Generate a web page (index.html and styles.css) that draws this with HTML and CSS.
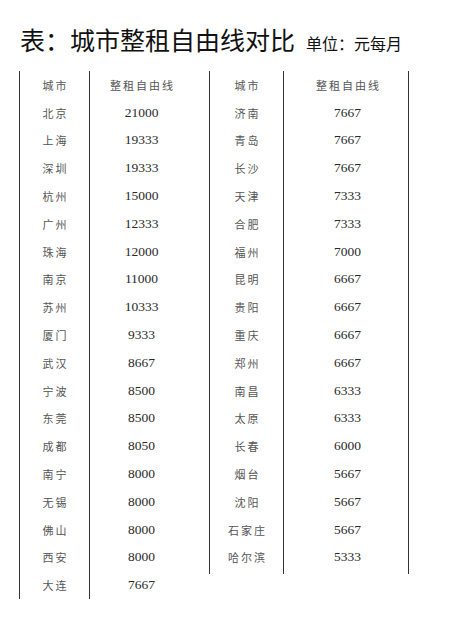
FILE: index.html
```html
<!DOCTYPE html>
<html lang="zh-CN">
<head>
<meta charset="utf-8">
<title>城市整租自由线对比</title>
<link rel="stylesheet" href="styles.css">
</head>
<body>
<div class="page">
  <h1 class="title">表：城市整租自由线对比<span class="unit">单位：元每月</span></h1>
  <div class="tables">
    <div class="group left">
      <div class="col c1">
        <div class="cell zh">城市</div>
        <div class="cell zh">北京</div>
        <div class="cell zh">上海</div>
        <div class="cell zh">深圳</div>
        <div class="cell zh">杭州</div>
        <div class="cell zh">广州</div>
        <div class="cell zh">珠海</div>
        <div class="cell zh">南京</div>
        <div class="cell zh">苏州</div>
        <div class="cell zh">厦门</div>
        <div class="cell zh">武汉</div>
        <div class="cell zh">宁波</div>
        <div class="cell zh">东莞</div>
        <div class="cell zh">成都</div>
        <div class="cell zh">南宁</div>
        <div class="cell zh">无锡</div>
        <div class="cell zh">佛山</div>
        <div class="cell zh">西安</div>
        <div class="cell zh">大连</div>
      </div>
      <div class="col c2">
        <div class="cell zh">整租自由线</div>
        <div class="cell num">21000</div>
        <div class="cell num">19333</div>
        <div class="cell num">19333</div>
        <div class="cell num">15000</div>
        <div class="cell num">12333</div>
        <div class="cell num">12000</div>
        <div class="cell num">11000</div>
        <div class="cell num">10333</div>
        <div class="cell num">9333</div>
        <div class="cell num">8667</div>
        <div class="cell num">8500</div>
        <div class="cell num">8500</div>
        <div class="cell num">8050</div>
        <div class="cell num">8000</div>
        <div class="cell num">8000</div>
        <div class="cell num">8000</div>
        <div class="cell num">8000</div>
        <div class="cell num">7667</div>
      </div>
    </div>
    <div class="group right">
      <div class="col c3">
        <div class="cell zh">城市</div>
        <div class="cell zh">济南</div>
        <div class="cell zh">青岛</div>
        <div class="cell zh">长沙</div>
        <div class="cell zh">天津</div>
        <div class="cell zh">合肥</div>
        <div class="cell zh">福州</div>
        <div class="cell zh">昆明</div>
        <div class="cell zh">贵阳</div>
        <div class="cell zh">重庆</div>
        <div class="cell zh">郑州</div>
        <div class="cell zh">南昌</div>
        <div class="cell zh">太原</div>
        <div class="cell zh">长春</div>
        <div class="cell zh">烟台</div>
        <div class="cell zh">沈阳</div>
        <div class="cell zh">石家庄</div>
        <div class="cell zh">哈尔滨</div>
      </div>
      <div class="col c4">
        <div class="cell zh">整租自由线</div>
        <div class="cell num">7667</div>
        <div class="cell num">7667</div>
        <div class="cell num">7667</div>
        <div class="cell num">7333</div>
        <div class="cell num">7333</div>
        <div class="cell num">7000</div>
        <div class="cell num">6667</div>
        <div class="cell num">6667</div>
        <div class="cell num">6667</div>
        <div class="cell num">6667</div>
        <div class="cell num">6333</div>
        <div class="cell num">6333</div>
        <div class="cell num">6000</div>
        <div class="cell num">5667</div>
        <div class="cell num">5667</div>
        <div class="cell num">5667</div>
        <div class="cell num">5333</div>
      </div>
    </div>
  </div>
</div>
</body>
</html>
```

FILE: styles.css
```css
html, body {
  margin: 0;
  padding: 0;
  background: #ffffff;
}

.page {
  width: 465px;
  height: 624px;
  padding: 23px 0 0 20px;
  box-sizing: border-box;
}

.title {
  margin: 0;
  font-family: "Noto Sans CJK SC", "Noto Sans", sans-serif;
  font-size: 25px;
  font-weight: 400;
  line-height: 32px;
  color: #111;
  white-space: nowrap;
}

.unit {
  font-size: 16px;
  font-weight: 400;
  margin-left: 11px;
  color: #111;
}

.tables {
  display: flex;
  margin-top: 12px;
  margin-left: -1px;
}

.group {
  display: flex;
  align-items: flex-start;
}

.col {
  display: flex;
  flex-direction: column;
  border-left: 1.5px solid #333;
  box-sizing: border-box;
}

.right .col {
  padding-bottom: 3px;
}

.c1 { width: 70px; }
.c2 { width: 120px; padding-right: 16px; }
.c3 { width: 74px; }
.c4 { width: 126px; border-right: 1.5px solid #333; padding-left: 3px; }

.cell {
  height: 27.8px;
  display: flex;
  align-items: center;
  justify-content: center;
  white-space: nowrap;
}

.zh {
  font-family: "Noto Sans CJK SC", sans-serif;
  font-size: 11px;
  letter-spacing: 2px;
  text-indent: 2px;
  color: #555;
}

.num {
  font-family: "Liberation Serif", serif;
  font-size: 13.5px;
  color: #2a2a2a;
}
```
